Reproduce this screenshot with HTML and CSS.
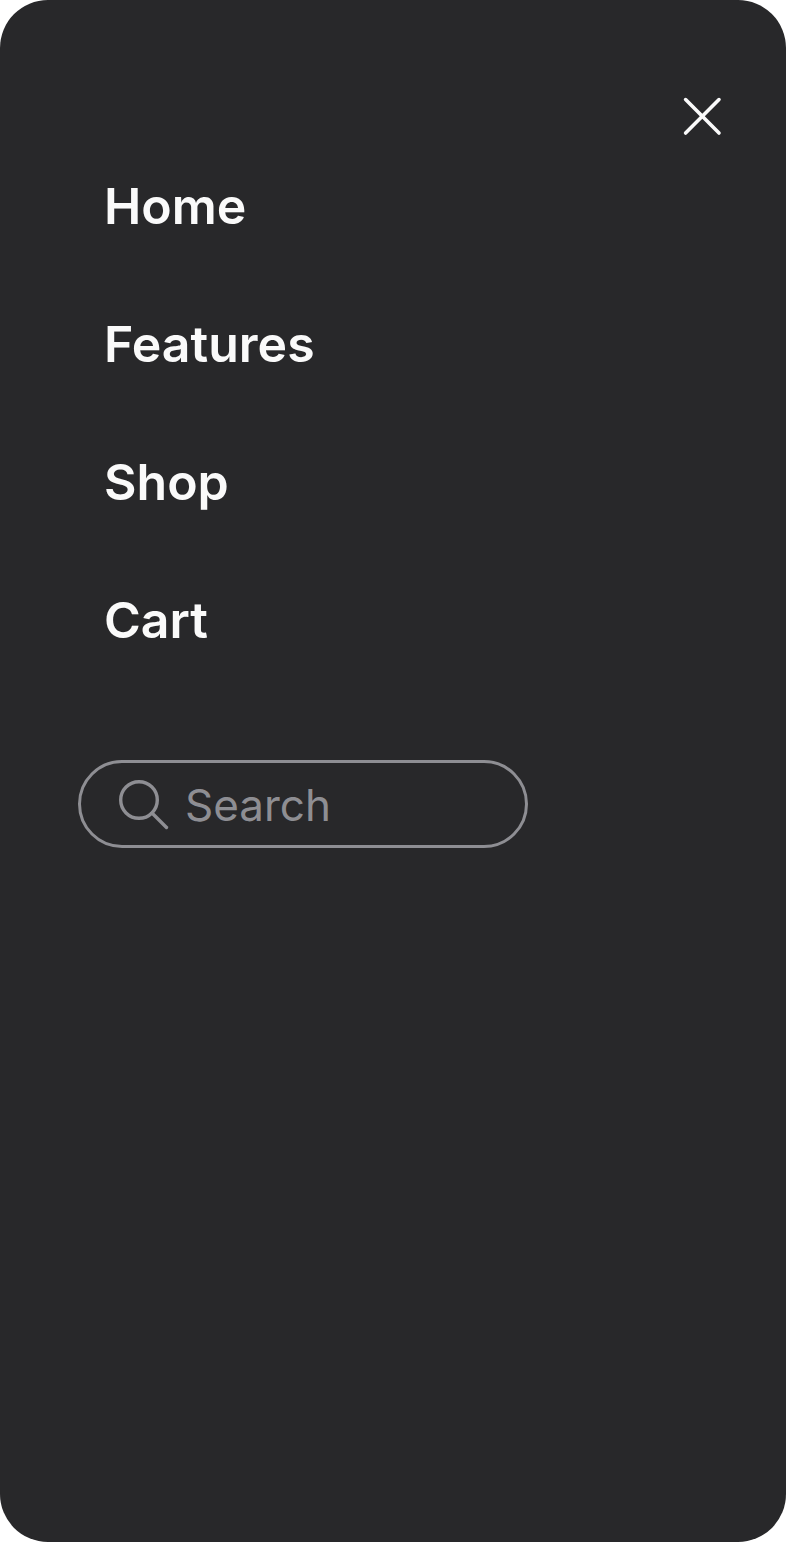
FILE: index.html
```html
<!DOCTYPE html>
<html lang="en">
<head>
    <meta charset="UTF-8">
    <meta name="viewport" content="width=device-width, initial-scale=1.0">
    <title>Menu</title>
    <link rel="stylesheet" href="styles.css">
</head>
<body>
    <div class="panel">
        <div class="close-row">
            <button class="close-btn" aria-label="Close">
                <svg width="40" height="40" viewBox="0 0 40 40" fill="none" stroke="#fafafa" stroke-width="3.6" stroke-linecap="round">
                    <path d="M3.6 3.6L37 37"/>
                    <path d="M37 3.6L3.6 37"/>
                </svg>
            </button>
        </div>
        <nav class="menu">
            <a class="menu-link" href="#">Home</a>
            <a class="menu-link" href="#">Features</a>
            <a class="menu-link" href="#">Shop</a>
            <a class="menu-link" href="#">Cart</a>
        </nav>
        <div class="search">
            <svg class="search-icon" width="50" height="50" viewBox="0 0 50 50" fill="none" stroke="#8e8e93" stroke-width="3.4" stroke-linecap="round">
                <circle cx="20" cy="20" r="18.3"/>
                <path d="M33 33L47.5 47.5"/>
            </svg>
            <span class="search-text">Search</span>
        </div>
    </div>
</body>
</html>
```

FILE: styles.css
```css
html, body {
    margin: 0;
    height: 100%;
    background: #fff;
}

.panel {
    box-sizing: border-box;
    height: 100vh;
    padding: 96px 64px 0 78px;
    background: #28282a;
    border-radius: 48px;
    font-family: Inter, "Liberation Sans", sans-serif;
}

.close-row {
    display: flex;
    justify-content: flex-end;
}

.close-btn {
    display: block;
    padding: 0;
    border: 0;
    background: none;
    height: 40px;
}

.menu {
    display: flex;
    flex-direction: column;
    gap: 80px;
    margin-top: 41px;
    padding-left: 26px;
}

.menu-link {
    color: #fafafa;
    font-size: 50px;
    font-weight: 600;
    line-height: 58px;
    text-decoration: none;
}

.search {
    box-sizing: border-box;
    display: flex;
    align-items: center;
    gap: 16px;
    width: 450px;
    height: 88px;
    margin-top: 111px;
    padding-left: 38px;
    border: 3px solid #8e8e93;
    border-radius: 44px;
}

.search-icon {
    flex: none;
    margin-top: 2px;
}

.search-text {
    margin-top: 2px;
    color: #8e8e93;
    font-size: 44px;
    line-height: 52px;
}
```
